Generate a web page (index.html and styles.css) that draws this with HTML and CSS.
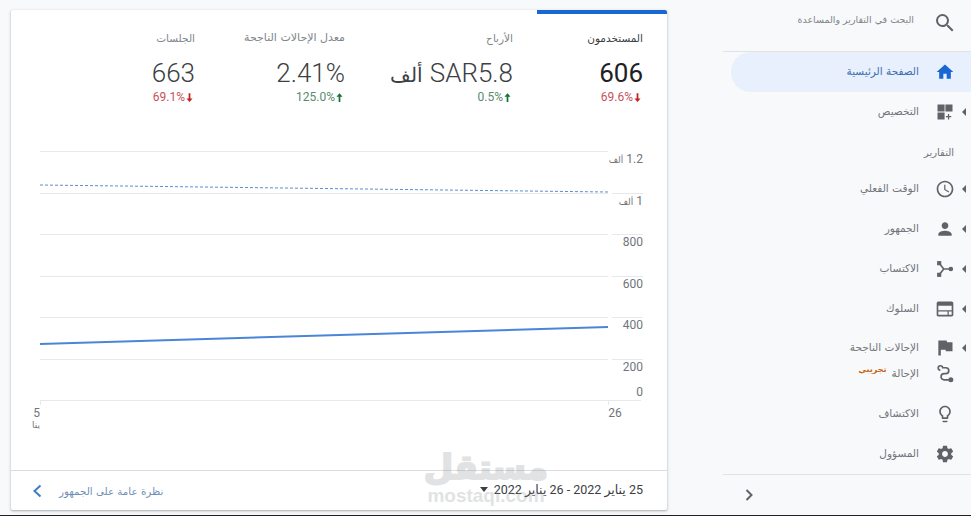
FILE: index.html
```html
<!DOCTYPE html>
<html lang="ar" dir="rtl">
<head>
<meta charset="utf-8">
<title>نظرة عامة على الجمهور</title>
<link rel="stylesheet" href="styles.css">
</head>
<body>
<div class="page">
  <aside class="sidebar">
    <div class="search">
      <svg class="icon search-icon" viewBox="0 0 24 24"><path d="M15.500 14h-.79l-.28-.27A6.471 6.471 0 0 0 16 9.500 6.500 6.500 0 1 0 9.500 16c1.610 0 3.090-.59 4.230-1.570l.27.28v.79l5 4.990L20.490 19l-4.990-5zm-6 0C7.010 14 5 11.990 5 9.500S7.010 5 9.500 5 14 7.010 14 9.500 11.990 14 9.500 14z"/></svg>
      <span class="search-text">البحث في التقارير والمساعدة</span>
    </div>
    <nav class="nav">
      <a class="item item-active"><span class="caret-slot"></span><svg class="icon" viewBox="0 0 24 24"><path d="M10 20v-6h4v6h5v-8h3L12 3 2 12h3v8z"/></svg><span class="label">الصفحة الرئيسية</span></a>
      <a class="item"><span class="caret-slot"><i class="caret"></i></span><svg class="icon" viewBox="0 0 24 24"><path d="M3 3h8.500v8.500H3zm9.500 0H21v8.500h-8.500zM3 12.500h8.500V21H3zm12.500 2h1.500v2.250h2.500v1.500H17V21h-1.500v-2.750H13v-1.500h2.500z"/></svg><span class="label">التخصيص</span></a>
      <div class="heading">التقارير</div>
      <a class="item"><span class="caret-slot"><i class="caret"></i></span><svg class="icon" viewBox="0 0 24 24"><path d="M11.990 2C6.470 2 2 6.480 2 12s4.470 10 9.990 10C17.520 22 22 17.520 22 12S17.520 2 11.990 2zM12 20c-4.420 0-8-3.580-8-8s3.580-8 8-8 8 3.580 8 8-3.580 8-8 8zm.5-13H11v6l5.250 3.150.75-1.230-4.500-2.670z"/></svg><span class="label">الوقت الفعلي</span></a>
      <a class="item"><span class="caret-slot"><i class="caret"></i></span><svg class="icon" viewBox="0 0 24 24"><path d="M12 12c2.210 0 4-1.790 4-4s-1.790-4-4-4-4 1.790-4 4 1.790 4 4 4zm0 2c-2.670 0-8 1.340-8 4v2h16v-2c0-2.660-5.330-4-8-4z"/></svg><span class="label">الجمهور</span></a>
      <a class="item"><span class="caret-slot"><i class="caret"></i></span><svg class="icon" viewBox="0 0 24 24"><rect x="2.500" y="2.500" width="5" height="5"/><rect x="2.500" y="16.500" width="5" height="5"/><circle cx="19" cy="12" r="2.800"/><path class="line" d="M5 5 10.500 12 5 19M10.500 12H18"/></svg><span class="label">الاكتساب</span></a>
      <a class="item"><span class="caret-slot"><i class="caret"></i></span><svg class="icon" viewBox="0 0 24 24"><path d="M20 3H4C2.890 3 2 3.900 2 5v14c0 1.100.89 2 2 2h16c1.100 0 2-.9 2-2V5c0-1.100-.89-2-2-2zm0 16H4v-4h11v4h1.500v-4H20v4zm0-5.500H4V8h16v5.500z"/></svg><span class="label">السلوك</span></a>
      <a class="item item-conv"><span class="caret-slot"><i class="caret"></i></span><svg class="icon" viewBox="0 0 24 24"><path d="M14.400 5 14 3H4v18h3v-7h5.600l.4 2h8V5z"/></svg><span class="label">الإحالات الناجحة</span></a>
      <a class="item item-ref"><span class="caret-slot"></span><svg class="icon" viewBox="0 0 24 24"><circle cx="19" cy="19" r="3"/><path class="line" d="M6.500 7.500a2.700 2.700 0 1 1 2.700-3H13a3.500 3.500 0 0 1 0 7H11a3.700 3.700 0 0 0 0 7.500h7"/></svg><span class="label">الإحالة</span><span class="beta">تجريبي</span></a>
      <a class="item"><span class="caret-slot"></span><svg class="icon" viewBox="0 0 24 24"><path d="M9 21c0 .55.45 1 1 1h4c.55 0 1-.45 1-1v-1H9v1zm3-19C8.140 2 5 5.140 5 9c0 2.380 1.190 4.470 3 5.740V17c0 .55.45 1 1 1h6c.55 0 1-.45 1-1v-2.260c1.810-1.270 3-3.360 3-5.740 0-3.860-3.140-7-7-7zm2.850 11.100-.85.6V16h-4v-2.300l-.85-.6A4.997 4.997 0 0 1 7 9c0-2.760 2.240-5 5-5s5 2.240 5 5c0 1.630-.8 3.160-2.150 4.100z"/></svg><span class="label">الاكتشاف</span></a>
      <a class="item"><span class="caret-slot"></span><svg class="icon" viewBox="0 0 24 24"><path d="M19.430 12.980c.04-.32.07-.64.07-.98s-.03-.66-.07-.98l2.110-1.650c.19-.15.24-.42.12-.64l-2-3.460c-.12-.22-.39-.3-.61-.22l-2.490 1c-.52-.4-1.080-.73-1.690-.98l-.38-2.650C14.460 2.180 14.250 2 14 2h-4c-.25 0-.46.18-.49.42l-.38 2.650c-.61.25-1.170.59-1.690.98l-2.490-1c-.23-.09-.49 0-.61.22l-2 3.460c-.13.22-.07.49.12.64l2.110 1.650c-.04.32-.07.65-.07.98s.03.66.07.98l-2.110 1.650c-.19.15-.24.42-.12.64l2 3.460c.12.22.39.3.61.22l2.490-1c.52.4 1.080.73 1.690.98l.38 2.650c.03.24.24.42.49.42h4c.25 0 .46-.18.49-.42l.38-2.650c.61-.25 1.170-.59 1.690-.98l2.490 1c.23.09.49 0 .61-.22l2-3.460c.12-.22.07-.49-.12-.64l-2.110-1.650zM12 15.500c-1.930 0-3.500-1.570-3.500-3.500s1.570-3.500 3.500-3.500 3.500 1.570 3.500 3.500-1.570 3.500-3.500 3.500z"/></svg><span class="label">المسؤول</span></a>
    </nav>
    <div class="collapse">
      <svg class="collapse-icon" viewBox="0 0 12 12"><path d="M3.500 1 8.500 6 3.500 11"/></svg>
    </div>
  </aside>
  <main class="card">
    <section class="tabs">
      <div class="tab tab-active">
        <div class="tab-label">المستخدمون</div>
        <div class="tab-value" dir="ltr">606</div>
        <div class="tab-delta down"><svg class="arrow" viewBox="0 0 8 10"><path d="M3 0h2v6h2.500L4 10 .5 6H3z"/></svg><span dir="ltr">69.6%</span></div>
      </div>
      <div class="tab">
        <div class="tab-label">الأرباح</div>
        <div class="tab-value">SAR5.8 <span class="tab-unit">ألف</span></div>
        <div class="tab-delta up"><svg class="arrow" viewBox="0 0 8 10"><path d="M3 10h2V4h2.500L4 0 .5 4H3z"/></svg><span dir="ltr">0.5%</span></div>
      </div>
      <div class="tab tab-wide">
        <div class="tab-label">معدل الإحالات الناجحة</div>
        <div class="tab-value" dir="ltr">2.41%</div>
        <div class="tab-delta up"><svg class="arrow" viewBox="0 0 8 10"><path d="M3 10h2V4h2.500L4 0 .5 4H3z"/></svg><span dir="ltr">125.0%</span></div>
      </div>
      <div class="tab">
        <div class="tab-label">الجلسات</div>
        <div class="tab-value" dir="ltr">663</div>
        <div class="tab-delta down"><svg class="arrow" viewBox="0 0 8 10"><path d="M3 0h2v6h2.500L4 10 .5 6H3z"/></svg><span dir="ltr">69.1%</span></div>
      </div>
    </section>
    <section class="chart">
      <svg class="chart-svg" viewBox="0 0 656 320">
        <g class="grid">
          <path d="M29 10.500H597M29 52.500H597M29 93.500H597M29 135.500H597M29 176.500H597M29 218.500H597M29 259.500H630"/>
          <path d="M601 52.500H632M601 93.500H632M601 135.500H632M601 176.500H632M601 218.500H632"/>
          <path d="M29.500 259V264M597.500 259V264"/>
        </g>
        <path class="dashed" d="M29 44 597 51"/>
        <path class="solid" d="M29 203 597 186"/>
        <g class="y-labels">
          <text x="632" y="22">1.2 <tspan class="unit">ألف</tspan></text>
          <text x="632" y="64">1 <tspan class="unit">ألف</tspan></text>
          <text x="632" y="105">800</text>
          <text x="632" y="147">600</text>
          <text x="632" y="188">400</text>
          <text x="632" y="230">200</text>
          <text x="632" y="255">0</text>
        </g>
        <text class="x-label" x="29" y="276">5</text>
        <text class="x-sub" x="29" y="287">ينا</text>
        <text class="x-end" x="604" y="276">26</text>
      </svg>
    </section>
    <footer class="card-foot">
      <div class="range"><span>25 يناير 2022 - 26 يناير 2022</span><i class="range-caret"></i></div>
      <a class="foot-link"><span>نظرة عامة على الجمهور</span><svg class="foot-chevron" viewBox="0 0 12 14"><path d="M9.500 1.500 3.500 7l6 5.500"/></svg></a>
    </footer>
  </main>
  <div class="watermark" aria-hidden="true"><span class="wm-ar">مستقل</span><span class="wm-en">mostaqi.com</span></div>
</div>
<div class="edge"></div>
</body>
</html>
```

FILE: styles.css
```css
* { box-sizing: border-box; }
html, body { margin: 0; padding: 0; height: 516px; overflow: hidden; background: #f8f9fa; }
body { font-family: "DejaVu Sans", "Roboto", sans-serif; color: #5f6368; }
.page { position: relative; display: flex; height: 515px; }
.edge { height: 1px; background: #202124; }

/* sidebar */
.sidebar { width: 248px; flex: none; display: flex; flex-direction: column; }
.search { height: 52px; flex: none; display: flex; align-items: flex-start; padding: 11px 14px 0 0; border-bottom: 1px solid #e0e3e6; }
.search-icon { width: 24px; height: 24px; }
.search-text { font-size: 9.5px; line-height: 18px; color: #80868b; margin-right: 19px; }
.icon { flex: none; fill: #5f6368; }
.item .icon { width: 20px; height: 20px; margin: 0 2px; }
.nav { flex: none; display: flex; flex-direction: column; }
.item { height: 40px; display: flex; align-items: center; font-size: 10.5px; color: #70757a; }
.caret-slot { width: 14px; flex: none; display: flex; justify-content: center; }
.caret { width: 0; height: 0; border-style: solid; border-width: 4px 4px 4px 0; border-color: transparent #5f6368 transparent transparent; }
.label { margin-right: 14px; margin-bottom: 2px; white-space: nowrap; }
.item-active { margin-left: 8px; border-top-left-radius: 20px; border-bottom-left-radius: 20px; background: #e8f0fe; color: #3f6fae; }
.item-active .icon { fill: #1967d2; }
.heading { height: 37px; display: flex; align-items: center; padding: 3px 17px 0 0; font-size: 10px; color: #70757a; }
.item-conv { height: 33px; padding-top: 5px; }
.item-ref { height: 24px; margin-bottom: 8px; }
.beta { font-size: 8px; font-weight: 700; color: #c8610f; margin-right: 5px; margin-top: -10px; }
.line { fill: none; stroke: #5f6368; stroke-width: 2; }
.collapse { border-top: 1px solid #e0e3e6; height: 41px; display: flex; align-items: center; justify-content: flex-end; padding-left: 20px; }
.collapse-icon { width: 12px; height: 12px; fill: none; stroke: #5f6368; stroke-width: 2; }

/* card */
.card { position: absolute; left: 11px; top: 10px; width: 656px; height: 500px; background: #fff; border-radius: 2px; box-shadow: 0 1px 2px rgba(60,64,67,.3), 0 1px 3px 1px rgba(60,64,67,.1); display: flex; flex-direction: column; overflow: hidden; }
.tabs { display: grid; grid-template-columns: 130px 168px 150px 208px; height: 131px; flex: none; }
.tab { padding: 4px 24px 0 0; text-align: right; }
.tab-active { background: linear-gradient(#1967d2, #1967d2) top / 100% 4px no-repeat; }
.tab-label { font-size: 10.5px; line-height: 22px; margin-top: 13px; color: #80868b; white-space: nowrap; }
.tab-wide .tab-label { font-size: 11px; }
.tab-active .tab-label { color: #3c4043; }
.tab-value { font-family: "Roboto", "DejaVu Sans", sans-serif; font-weight: 300; font-size: 26px; line-height: 32px; height: 32px; margin-top: 8px; color: #3c4043; white-space: nowrap; }
.tab-unit { font-size: 20px; line-height: 1; }
.tab-active .tab-value { font-weight: 400; color: #202124; }
.tab-delta { font-family: "Roboto", sans-serif; font-size: 12px; line-height: 16px; padding-right: 2px; display: flex; align-items: center; gap: 1px; }
.down { color: #c5525a; }
.up { color: #5a8a6f; }
.arrow { width: 7px; height: 9px; flex: none; }
.down .arrow { fill: #c5221f; }
.up .arrow { fill: #137333; }

.chart { flex: 1; min-height: 0; }
.chart-svg { display: block; width: 656px; height: 320px; }
.grid path { fill: none; stroke: #e6e8ea; stroke-width: 1; }
.dashed { fill: none; stroke: #5b8bd0; stroke-width: 1; stroke-dasharray: 3 2; }
.solid { fill: none; stroke: #4a86d8; stroke-width: 2; }
.y-labels text { font-family: "Roboto", sans-serif; font-size: 12px; fill: #70757a; text-anchor: start; stroke: #fff; stroke-width: 4px; paint-order: stroke; }
.y-labels .unit { font-family: "DejaVu Sans", sans-serif; font-size: 9px; }
.x-label { font-family: "Roboto", sans-serif; font-size: 12px; fill: #70757a; text-anchor: start; }
.x-end { font-family: "Roboto", sans-serif; font-size: 12px; fill: #70757a; text-anchor: middle; }
.x-sub { font-size: 9px; fill: #70757a; text-anchor: start; }

.card-foot { height: 40px; flex: none; border-top: 1px solid #dadce0; display: flex; align-items: center; justify-content: space-between; padding: 0 24px 0 20px; }
.range { display: flex; align-items: center; gap: 6px; margin-bottom: 3px; font-family: "Roboto", "DejaVu Sans", sans-serif; font-size: 12.500px; color: #3c4043; }
.range-caret { width: 0; height: 0; border-style: solid; border-width: 5px 4.500px 0 4.500px; border-color: #3c4043 transparent transparent transparent; }
.foot-link { display: flex; align-items: center; gap: 16px; font-size: 10.300px; color: #6f8fb5; }
.foot-chevron { width: 12px; height: 14px; fill: none; stroke: #3f7cc4; stroke-width: 2; }

/* watermark */
.watermark { position: absolute; left: 425px; top: 448px; width: 122px; display: flex; flex-direction: column; align-items: center; color: #8f9296; opacity: .26; pointer-events: none; }
.wm-ar { font-size: 34px; font-weight: 700; line-height: 38px; -webkit-text-stroke: 2px #8f9296; }
.wm-en { font-family: "Liberation Sans", sans-serif; font-weight: 700; font-size: 19px; line-height: 20px; direction: ltr; }
```
